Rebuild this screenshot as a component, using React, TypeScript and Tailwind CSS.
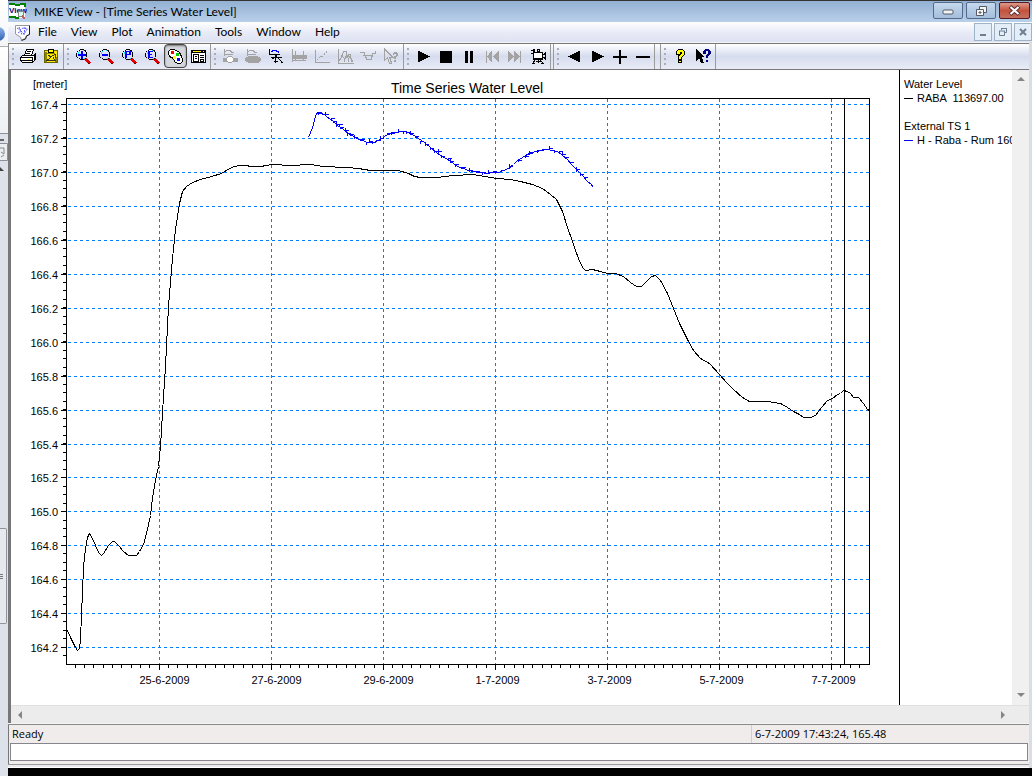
import type { ReactNode } from "react";

const GRID = "#007fff";

const levels = Array.from({ length: 17 }, (_, i) => ({
  label: (167.4 - i * 0.2).toFixed(1),
  y: Math.round(104 + i * 33.95) + 0.5,
}));

const dates = [
  "25-6-2009",
  "27-6-2009",
  "29-6-2009",
  "1-7-2009",
  "3-7-2009",
  "5-7-2009",
  "7-7-2009",
].map((label, i) => ({ label, x: 159.5 + i * 112 }));

const minorX = Array.from({ length: 85 }, (_, i) => Math.floor(75.3 + i * 9.335) + 0.5);
const minorY = Array.from({ length: 66 }, (_, i) => Math.floor(104 + i * 8.49) + 0.5);

const waterLevel =
  "66,628 70,637 75,647 77,650 79,648 80,640 81,613 82,593 83,566 85,548 87,537 89,533 92,538 95,545 98,552 101,555 103,553 108,545 112,541 114,541 118,545 123,551 128,555 136,555 139,551 143,544 146,533 150,515 152,497 155,480 158,466 160,446 162,412 165,366 168,306 172,258 175,229 179,203 182,191 186,186 192,182 200,179 211,176 221,173 231,167 238,165 246,165 250,166 260,166 272,164 290,165 310,164 323,166 346,167 358,168 370,170 398,170 408,173 414,176 420,177 437,177 453,175 472,174 484,176 497,178 510,179 520,181 532,184 542,188 550,194 556,199 562,211 567,227 571,238 574,247 578,258 582,267 585,270 592,269 600,271 607,273 615,273 623,276 630,282 636,286 641,286 647,280 651,276 655,275 660,280 667,293 673,308 679,323 687,339 693,350 700,358 709,363 719,374 726,382 733,389 742,397 749,401 767,401 780,403 787,407 793,411 799,414 803,417 810,417 815,415 821,407 827,400 832,398 837,394 840,393 843,390 847,391 850,393 853,397 858,397 863,403 867,409 869,410";

const externalTs =
  "308,137 310,132 312,127 315,116 316,113 318,112 320,113 324,114 326,116 330,119 333,121 337,125 340,127 343,129 348,133 353,136 358,139 362,140 367,142 373,142 376,141 379,139 382,138 385,135 388,134 392,132 396,132 400,131 405,131 408,132 412,134 418,138 424,142 430,147 436,152 440,155 447,159 453,163 459,167 463,168 468,170 473,171 480,172 487,173 492,172 498,172 503,170 508,168 513,164 517,160 522,157 527,154 531,152 536,151 541,150 547,149 552,150 557,151 561,154 567,159 571,164 576,169 580,173 583,176 586,180 588,182 590,183 593,187";

// short vertical readings scattered round the measured series
const spikes: [number, number][] = [
  [318, 112], [325, 114], [331, 118], [333, 121], [336, 124], [339, 124], [340, 127], [345, 130],
  [347, 133], [350, 134], [354, 137], [361, 139], [366, 142], [369, 141], [372, 142], [376, 140],
  [380, 138], [387, 133], [391, 133], [398, 131], [403, 131], [406, 132], [410, 133], [415, 136],
  [420, 141], [425, 144], [430, 148], [434, 151], [438, 151], [441, 156], [448, 158], [450, 161],
  [455, 164], [462, 167], [469, 170], [476, 171], [482, 172], [488, 172], [493, 171], [501, 170],
  [509, 166], [518, 160], [525, 156], [529, 153], [537, 150], [542, 149], [549, 148], [554, 151],
  [559, 151], [562, 154], [565, 157], [570, 162], [576, 169], [580, 174], [584, 177],
];

function Chart() {
  return (
    <svg
      viewBox="11 70 888 635"
      className="block h-auto w-full font-['Liberation_Sans',Arial,sans-serif]"
      role="img"
      aria-label="Time Series Water Level"
    >
      <text x="33" y="88" className="text-[11px]">[meter]</text>
      <text x="467" y="93" textAnchor="middle" className="text-[14px]">
        Time Series Water Level
      </text>
      <g shapeRendering="crispEdges" stroke={GRID} strokeDasharray="3 3">
        {levels.map((l) => (
          <line key={l.label} x1="68" x2="869" y1={l.y} y2={l.y} />
        ))}
        {dates.map((d) => (
          <line key={d.label} x1={d.x} x2={d.x} y1="99" y2="664" />
        ))}
      </g>
      <g shapeRendering="crispEdges" stroke="#000" fill="none">
        <rect x="66.5" y="98.5" width="803" height="566" />
        <line x1="844.5" x2="844.5" y1="98" y2="664" />
        {levels.map((l) => (
          <line key={l.label} x1="61" x2="66" y1={l.y} y2={l.y} />
        ))}
        {minorY.map((y) => (
          <line key={y} x1="63" x2="66" y1={y} y2={y} />
        ))}
        {dates.map((d) => (
          <line key={d.label} x1={d.x} x2={d.x} y1="665" y2="670" />
        ))}
        {minorX.map((x) => (
          <line key={x} x1={x} x2={x} y1="665" y2="668" />
        ))}
        <polyline points={waterLevel} transform="translate(0.5 0.5)" />
      </g>
      <g shapeRendering="crispEdges" stroke="#00f" fill="none" transform="translate(0.5 0.5)">
        <polyline points={externalTs} />
        {spikes.map(([x, y], i) => (
          <path key={x} d={`M${x} ${y - (i % 3 === 1 ? 3 : 1)}V${y + (i % 4 === 0 ? 2 : 1)}M${x} ${y}h3`} />
        ))}
      </g>
      <g className="text-[11px]">
        {levels.map((l) => (
          <text key={l.label} x="58" y={l.y + 4} textAnchor="end">
            {l.label}
          </text>
        ))}
        {dates.map((d, i) => (
          <text key={d.label} x={d.x + (i < 3 ? 5 : 2)} y="684" textAnchor="middle">
            {d.label}
          </text>
        ))}
      </g>
    </svg>
  );
}

function Icon({ children, color = "#000" }: { children: ReactNode; color?: string }) {
  return (
    <svg width="17" height="17" viewBox="0 0 17 17" fill="none" stroke={color} shapeRendering="crispEdges">
      {children}
    </svg>
  );
}

function Magnifier({ kind }: { kind: "plus" | "minus" | "P" | "E" }) {
  return (
    <Icon>
      <path d="M9.5 10.5l5 5M10.5 10l5 5M9.5 11.5l4 4" stroke="#e00000" />
      <path d="M14.5 14.5v1M12.5 15.5h2" stroke="#700000" />
      <path d="M4.5 1.5h4M3.5 2.5h1M8.5 2.5h2M1.5 4.5v4M2.5 3v1M11.5 4v5M10.5 3v1M2.5 9v1M3.5 10.5h1M4.5 11.5h4M9 10.5h2" />
      <path d="M4 3.5h1M3.5 4v2M9 10.5h1M8 2.5h1" stroke="#00f0ff" />
      {kind === "plus" && <path d="M6 3h2v3h3v2H8v3H6V8H3V6h3z" fill="#00f" stroke="none" />}
      {kind === "minus" && <path d="M4 6h6v2H4z" fill="#00f" stroke="none" />}
      {kind === "P" && <path d="M4 3h2v7H4zM6 3h2v1H6zM6 6h2v1H6zM8 3h2v4H8z" fill="#00f" stroke="none" />}
      {kind === "E" && <path d="M4 3h2v7H4zM6 3h3v1H6zM6 6h2v1H6zM6 9h3v1H6z" fill="#00f" stroke="none" />}
    </Icon>
  );
}

const GREY = "#a3a3a3";

const tools: { name: string; icon: ReactNode; pressed?: boolean; disabled?: boolean }[][] = [
  [
    {
      name: "Print",
      icon: (
        <Icon>
          <path d="M4.500 7.500l2-6h7l-2 6z" fill="#fff" />
          <path d="M7 3.500h4M6 5.500h4" />
          <path d="M2.500 7.500h11l2-2v6l-3 3h-10l-2-2v-3z" fill="#fff" />
          <path d="M1 9.500h12M1 12.500h11M3 14.500h9M12.500 9v5M14.500 7v5" />
          <path d="M8 11.500h2" stroke="#ff0" />
        </Icon>
      ),
    },
    {
      name: "Copy to clipboard",
      icon: (
        <Icon>
          <path d="M1.500 2.500h13v12h-13z" fill="#ffe800" stroke="#6b6500" />
          <path d="M2 4h2v10H2zM4 5h8v1H4zM12 9h2v5h-2z" fill="#8c8500" stroke="none" />
          <path d="M5.500 1.500h5v3h-5z" fill="#ff0" />
          <path d="M5 7.500l3 1 4-2v3M8 9.500l-4 3h8l-2-3" stroke="#333" />
        </Icon>
      ),
    },
  ],
  [
    { name: "Zoom in", icon: <Magnifier kind="plus" /> },
    { name: "Zoom out", icon: <Magnifier kind="minus" /> },
    { name: "Previous zoom", icon: <Magnifier kind="P" /> },
    { name: "Zoom extent", icon: <Magnifier kind="E" /> },
    {
      name: "Palette",
      pressed: true,
      icon: (
        <Icon>
          <path d="M1.500 5.500v-2l2-2h4l5 3 2 4 1 3v2l-2 2h-3l-3-2-1-3-4-2z" fill="#fff" />
          <path d="M4 3h3v3H4z" fill="#f00" stroke="none" />
          <path d="M9 5h3v3H9z" fill="#0c0" stroke="none" />
          <path d="M6 8h3v3H6z" fill="#ff0" stroke="none" />
          <path d="M10 10h3v3h-3z" fill="#00f" stroke="none" />
        </Icon>
      ),
    },
    {
      name: "Properties",
      icon: (
        <Icon>
          <path d="M1.500 2.500h14v12h-14z" fill="#fff" />
          <path d="M1 2h15v3H1z" fill="#000" stroke="none" />
          <path d="M3 3.500h8M13 3.500h1" stroke="#ffe800" />
          <path d="M3.500 6.500h5v7h-5zM5 8.500h2M5 10.500h2M10 7.500h4M10 9.500h4M10.500 11.500h3v2h-3z" />
        </Icon>
      ),
    },
  ],
  [
    {
      name: "Network plot",
      disabled: true,
      icon: (
        <Icon color={GREY}>
          <path d="M2.500 1v7M3 3.500l2-1h3l2 2h2M3 6.500h8" />
          <path d="M1 10h4v3H1zM11 10h4v3h-4z" fill={GREY} />
          <path d="M6.500 8.500h3l2 2v2l-2 2h-3l-2-2v-2z" fill="#fff" />
        </Icon>
      ),
    },
    {
      name: "Filled plot",
      disabled: true,
      icon: (
        <Icon color={GREY}>
          <path d="M2.500 1v7M3 3.500l2-1h3l2 2h2M3 6.500h8" />
          <path d="M3.500 8.500h9l3 2v2l-2 2h-10l-3-2v-2z" fill={GREY} />
        </Icon>
      ),
    },
    {
      name: "Time series",
      icon: (
        <Icon>
          <path d="M1.500 1v6M1 6.500h11M7.500 6v9M3 9.500h11M5.500 13.500h4M7.500 7l7 8M4.500 11l3-2" />
          <path d="M3 3.500h1v-1h4v1h2v1h1" stroke="#00f" />
        </Icon>
      ),
    },
    {
      name: "Profile plot",
      disabled: true,
      icon: (
        <Icon color={GREY}>
          <path d="M1.500 1v13M4.500 3v10M12.500 3v10M1 12.500h14" />
          <path d="M2 7h3l2 1 3-1h5v3H2z" fill={GREY} />
        </Icon>
      ),
    },
    {
      name: "Q-h relation",
      disabled: true,
      icon: (
        <Icon color={GREY}>
          <path d="M1.500 2v12.500h14" />
          <path d="M3 12l4-4h2l5-6" strokeDasharray="2 1" />
        </Icon>
      ),
    },
    {
      name: "Series comparison",
      disabled: true,
      icon: (
        <Icon color={GREY}>
          <path d="M1.500 1v14.500h15M2 13l3-5 3 3 3-4 5 7M3 12l4-9h2l3 11M7 14l2-6 4-2 2 8" />
        </Icon>
      ),
    },
    {
      name: "Cross section",
      disabled: true,
      icon: (
        <Icon color={GREY}>
          <path d="M0 4.500h4l3 7h4l2-6h3M3 7.500h10M15.500 3v3M5 9.500h1" />
        </Icon>
      ),
    },
    {
      name: "Query",
      disabled: true,
      icon: (
        <Icon color={GREY}>
          <path d="M1.500 1v11l3-2 2 5h2l-2-6h3z" />
          <path d="M10 5h1V4h3v1h1v3h-1v1h-1v2h-2V8h2V6h-2v1h-1zM11 12h2v2h-2z" fill={GREY} stroke="none" />
        </Icon>
      ),
    },
  ],
  [
    { name: "Play", icon: <Icon><path d="M3 2.500v12l12-6z" fill="#000" stroke="none" /></Icon> },
    { name: "Stop", icon: <Icon><path d="M2 3h12v12H2z" fill="#000" stroke="none" /></Icon> },
    { name: "Pause", icon: <Icon><path d="M4 3h3v12H4zM9 3h3v12H9z" fill="#000" stroke="none" /></Icon> },
    {
      name: "Rewind",
      disabled: true,
      icon: <Icon><path d="M2 3h1v12H2zM8 2v13L3 8.500zM15 2v13L9 8.500z" fill={GREY} stroke="none" /></Icon>,
    },
    {
      name: "Fast forward",
      disabled: true,
      icon: <Icon><path d="M1 2v13l6-6.500zM7 2v13l6-6.500zM13 3h1v12h-1z" fill={GREY} stroke="none" /></Icon>,
    },
    {
      name: "Record",
      icon: (
        <Icon>
          <path d="M3.500 4.500h9v7h-9z" fill="#fff" />
          <path d="M3.500 1.500h1v2h-1zM7.500 1.500h2v2h-2zM1 2.500h2M12 6.500h2l1-1v5l-1-1h-2M3 10.500h9M1 5.500h2M5 12l-2 3M8.500 11v4M10 12l3 3M6 13.500h5M2 15.500h3M11 15.500h3" />
        </Icon>
      ),
    },
  ],
  [
    { name: "Step back", icon: <Icon><path d="M15 2.500v12L3 8.500z" fill="#000" stroke="none" /></Icon> },
    { name: "Step forward", icon: <Icon><path d="M4 2.500v12l12-6z" fill="#000" stroke="none" /></Icon> },
    { name: "Faster", icon: <Icon><path d="M2 9h14M9 2v14" strokeWidth="2" /></Icon> },
    { name: "Slower", icon: <Icon><path d="M2 9h14" strokeWidth="2" /></Icon> },
  ],
  [
    {
      name: "Help",
      icon: (
        <Icon>
          <path d="M4.500 6V3.500l2-2h4l2 2v3l-3 3v1.500h-3v-3l3-2.500v-1.500h-1.500v2z" fill="#ff0" />
          <path d="M6.500 12.500h3v2h-3z" fill="#ff0" />
        </Icon>
      ),
    },
    {
      name: "Context help",
      icon: (
        <Icon>
          <path d="M1 1v12l3-3 2 5h3L6.500 9H9z" fill="#000" stroke="none" />
          <path d="M8 3h1V2h1V1h4v1h1v1h1v3h-1v1h-1v1h-1v2h-2V7h1V6h1V3h-2v3H8zM11 12h2v2h-2z" fill="#000080" stroke="none" />
        </Icon>
      ),
    },
  ],
];

const groupMargins = ["", "", "", "", "ml-[2px]", "ml-[5px]"];

function Toolbar() {
  return (
    <div className="flex h-[25px] overflow-hidden border-l border-[#8a8a8a] bg-linear-to-b from-white via-[#d6dcee] to-[#e9ecf7]">
      {tools.map((group, i) => (
        <div key={i} className={`flex shrink-0 border-r border-[#9a9a9a] ${groupMargins[i]} ${i > 3 ? "border-l" : ""}`}>
          <div className="flex w-2 flex-col items-center justify-center gap-[3px]">
            {[0, 1, 2, 3].map((dot) => (
              <span key={dot} className="size-[2px] bg-[#a9adba]" />
            ))}
          </div>
          {group.map((tool) => (
            <button
              key={tool.name}
              type="button"
              aria-label={tool.name}
              disabled={tool.disabled}
              className={`flex h-[24px] w-[23px] items-center justify-center ${
                tool.pressed ? "rounded-[4px] border border-[#444] bg-[#d5d7dd] shadow-[inset_0_1px_2px_#777]" : ""
              }`}
            >
              {tool.icon}
            </button>
          ))}
        </div>
      ))}
    </div>
  );
}

function TitleBar() {
  return (
    <header className="flex h-[22px] items-center overflow-hidden border-t border-[#333] bg-linear-to-b from-[#93b0d2] to-[#b9d0ea] pr-[2px]">
      <svg width="18" height="17" viewBox="0 0 18 17" className="ml-px" shapeRendering="crispEdges">
        <path d="M0 1h6v1h5V1h5v14H0z" fill="#fff" />
        <path d="M0 1h5l2 1h3l2-1h4v3M0 14h6l1 1h3" stroke="#008000" strokeWidth="2" fill="none" />
        <text x="0" y="10" className="font-['Liberation_Sans',sans-serif] text-[8px] font-bold" fill="#000080">View</text>
        <circle cx="12" cy="11" r="3" fill="#cfe" stroke="#888" />
        <path d="M13 13l3 3" stroke="#c06060" strokeWidth="2" />
      </svg>
      <h1 className="ml-[7px] flex-1 font-['Lato',sans-serif] text-[12px] leading-5 whitespace-nowrap">MIKE View - [Time Series Water Level]</h1>
      <div className="flex gap-[3px] self-start pt-px">
        <button type="button" aria-label="Minimize" className="flex h-[17px] w-[30px] items-center justify-center rounded-[2px] border border-[#536a8a] bg-linear-to-b from-[#c5d8ee] to-[#a4bedb]">
          <svg width="12" height="9" viewBox="0 0 12 9">
            <rect x="1" y="4" width="10" height="4" rx="1" fill="#f4f4f4" stroke="#555b66" />
          </svg>
        </button>
        <button type="button" aria-label="Restore" className="flex h-[17px] w-[30px] items-center justify-center rounded-[2px] border border-[#536a8a] bg-linear-to-b from-[#c5d8ee] to-[#a4bedb]">
          <svg width="13" height="12" viewBox="0 0 13 12" stroke="#555b66" fill="#f4f4f4">
            <path d="M4.500 1.500h7v6h-7z" />
            <path d="M1.500 4.500h7v6h-7z" />
            <path d="M4 7h2v1H4z" fill="#9db8d8" />
          </svg>
        </button>
        <button type="button" aria-label="Close" className="flex h-[17px] w-[31px] items-center justify-center rounded-[2px] border border-[#5b1a1f] bg-linear-to-b from-[#dd9a8d] via-[#c4523c] to-[#c3705f]">
          <svg width="13" height="11" viewBox="0 0 13 11">
            <path d="M2 1.500l9 8M11 1.500l-9 8" stroke="#5a3038" strokeWidth="4" />
            <path d="M2.500 2l8 7M10.500 2l-8 7" stroke="#fff" strokeWidth="2" />
          </svg>
        </button>
      </div>
    </header>
  );
}

const mdiButton = "flex h-[18px] w-[18px] items-center justify-center border border-[#9fb3c6] bg-[#e4eef9]";

function MenuBar() {
  return (
    <nav className="flex h-[20px] items-center bg-linear-to-b from-white via-[#e9ecf7] to-[#dde1f2]">
      <svg width="17" height="17" viewBox="0 0 17 17" className="mr-0.5 ml-[6px]">
        <path d="M1.500 1.500h14v9l-3 1-1 3-4 1.500-1-3-5-3z" fill="#fff" stroke="#999" />
        <path d="M15.500 1.500v9l-3 1.500-1 3-4 1.500" stroke="#222" fill="none" />
        <path d="M3 4l3 2 3-2 4 1M4 9l3-2 3 3 4-6M5 3l3 8M11 3l-1 8" stroke="#5a5aff" fill="none" strokeDasharray="2 1" />
      </svg>
      {["File", "View", "Plot", "Animation", "Tools", "Window", "Help"].map((item) => (
        <button key={item} type="button" className="px-[7px] font-['Lato',sans-serif] text-[12px] leading-5 first-of-type:pl-[5px]">
          {item}
        </button>
      ))}
      <div className="ml-auto flex gap-[2px]">
        <button type="button" aria-label="Minimize document" className={mdiButton}>
          <svg width="10" height="10" viewBox="0 0 10 10"><path d="M2 7h6v2H2z" fill="#6d7f90" /></svg>
        </button>
        <button type="button" aria-label="Restore document" className={mdiButton}>
          <svg width="10" height="10" viewBox="0 0 10 10" fill="none" stroke="#6d7f90">
            <path d="M3 1.500h6M8.500 1v4.500H7M3.500 1v2M1 4h6M1.500 4v4.500h5V4" />
          </svg>
        </button>
        <button type="button" aria-label="Close document" className={mdiButton}>
          <svg width="10" height="10" viewBox="0 0 10 10"><path d="M2 2l6 6M8 2L2 8" stroke="#6d7f90" strokeWidth="2" /></svg>
        </button>
      </div>
    </nav>
  );
}

function Arrow({ d }: { d: string }) {
  return (
    <svg width="8" height="8" viewBox="0 0 8 8">
      <path d={d} fill="#858585" />
    </svg>
  );
}

function Legend() {
  return (
    <aside className="w-[113px] shrink-0 overflow-hidden border-l border-black pt-[7px] pl-1 font-['Liberation_Sans',Arial,sans-serif] text-[11px] leading-[14px] whitespace-pre">
      <h2>Water Level</h2>
      <p className="flex items-center gap-1">
        <span className="h-px w-[9px] shrink-0 bg-black" />
        {"RABA  113697.00"}
      </p>
      <h2 className="mt-[14px]">External TS 1</h2>
      <p className="flex items-center gap-1">
        <span className="h-px w-[9px] shrink-0 bg-[#00f]" />
        H - Raba - Rum 160
      </p>
    </aside>
  );
}

// the sliver of the window that sits behind on the left
function BackWindow() {
  return (
    <div className="flex w-2 shrink-0 flex-col overflow-hidden bg-[#dde1ea]">
      <div className="h-[47px] shrink-0 border-b border-[#b0b0b0] bg-linear-to-b from-white to-[#f4f5f7] pt-[27px]">
        <div className="-ml-[9px] size-[14px] rounded-full bg-linear-to-b from-[#8db4e8] to-[#2d5fb4]" />
      </div>
      <div className="h-[87px] shrink-0 border-b border-[#8a8f98] bg-linear-to-b from-white to-[#eef0f2]" />
      <div className="mt-[5px] h-[2px] w-1 shrink-0 bg-[#666]" />
      <svg width="8" height="34" viewBox="0 0 8 34" className="shrink-0" fill="none">
        <path d="M0 2.500h7.500v17H0" fill="#eceef2" stroke="#8a8f98" />
        <path d="M0 7h4v6L1 11M4 14l-3 2" stroke="#888" />
        <path d="M0 26l4 4H0z" fill="#444" />
      </svg>
      <div className="mt-[353px] flex h-[96px] w-[7px] shrink-0 flex-col justify-center gap-px rounded-r-[2px] border border-l-0 border-[#8e939e] bg-[#e6e9ee]">
        <span className="h-px w-[3px] bg-[#777]" />
        <span className="h-px w-[3px] bg-[#777]" />
        <span className="h-px w-[3px] bg-[#777]" />
      </div>
    </div>
  );
}

export default function App() {
  return (
    <div className="flex min-h-screen bg-black font-['Open_Sans','Noto_Sans',sans-serif] text-black">
      <BackWindow />
      <div className="flex min-w-0 flex-1 flex-col">
        <TitleBar />
        <MenuBar />
        <div className="border-r-3 border-[#d9dde6] bg-[#f0eceb]">
          <div className="h-[2px] border-t border-[#f4f4f4] bg-[#777]" />
          <Toolbar />
          <main className="border-t border-l-3 border-[#777] bg-white">
            <div className="flex">
              <div className="min-w-0 flex-1 bg-white">
                <Chart />
              </div>
              <Legend />
              <div className="flex w-[17px] shrink-0 flex-col items-center justify-between bg-[#f0f0f0] py-[5px]">
                <Arrow d="M4 2l4 4H0z" />
                <Arrow d="M0 1h8L4 5z" />
              </div>
            </div>
            <div className="flex h-[18px] items-center justify-between border-t border-[#e0e0e0] bg-[#ececec] pr-[22px] pl-[5px]">
              <Arrow d="M6 0v8L2 4z" />
              <Arrow d="M2 0v8l4-4z" />
            </div>
          </main>
          <div className="h-[2px] border-b border-[#8a8a8a] bg-[#f4f4f4]" />
          <footer className="border-l border-[#777] pb-[3px]">
            <div className="flex h-[18px] items-center text-[11px] leading-[18px]">
              <span className="flex-1 pl-[3px]">Ready</span>
              <span className="w-[278px] border-l border-[#cfcfcf] pl-[3px]">6-7-2009 17:43:24, 165.48</span>
            </div>
            <input aria-label="Message" className="mx-px block h-[18px] w-[calc(100%-2px)] border border-[#85858d] bg-white px-1 text-[12px] outline-none" />
          </footer>
          <div className="h-[4px] border-y border-t-[#9a9a9a] border-b-white bg-[#e9e9ee]" />
        </div>
      </div>
    </div>
  );
}
